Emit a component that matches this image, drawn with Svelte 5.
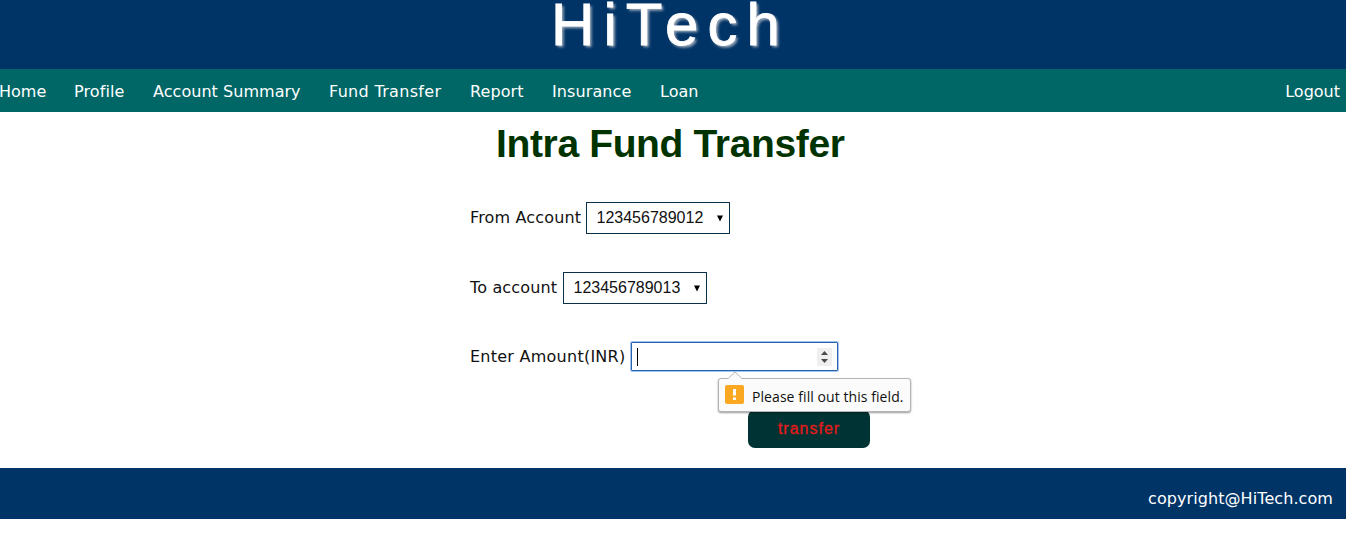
<script>
  const links = [
    { label: 'Home', width: 75, spacing: 0 },
    { label: 'Profile', width: 79, spacing: 0.1 },
    { label: 'Account Summary', width: 176, spacing: 0.04 },
    { label: 'Fund Transfer', width: 141, spacing: 0.32 },
    { label: 'Report', width: 82, spacing: 0.1 },
    { label: 'Insurance', width: 108, spacing: 0.1 },
    { label: 'Loan', width: 60, spacing: 0 }
  ];
  const accounts = [
    { label: 'From Account', value: '123456789012', labelWidth: 116 },
    { label: 'To account', value: '123456789013', labelWidth: 93 }
  ];
</script>

<div class="page">
  <header><div class="brand">HiTech</div></header>
  <nav>
    <div class="links">
      {#each links as link}
        <span class="link" style="width: {link.width}px; letter-spacing: {link.spacing}px">{link.label}</span>
      {/each}
    </div>
    <span>Logout</span>
  </nav>
  <main>
    <h1>Intra Fund Transfer</h1>
    <form onsubmit={(e) => e.preventDefault()}>
      {#each accounts as account}
        <div class="row">
          <span class="label" style="width: {account.labelWidth}px">{account.label}</span>
          <div class="select">
            <span>{account.value}</span>
            <svg width="6" height="7" viewBox="0 0 6 7"><path d="M0 0.5H6L3 6.5Z" fill="#000" /></svg>
          </div>
        </div>
      {/each}
      <div class="row amount-row">
        <span class="label amount-label">Enter Amount(INR)</span>
        <div class="amount">
          <span class="caret"></span>
          <svg width="15" height="18" viewBox="0 0 15 18">
            <rect width="15" height="18" fill="#efefef" />
            <path d="M4 7L7.5 3L11 7ZM4 11L7.5 15L11 11Z" fill="#4a4a4a" />
          </svg>
          <div class="tip">
            <svg class="arrow" width="14" height="8" viewBox="0 0 14 8">
              <path d="M0 8L7 1L14 8Z" fill="#fbfbfb" />
              <path d="M0.5 7L7 1L13.5 7" fill="none" stroke="#b5b5b5" />
            </svg>
            <svg class="warn" width="19" height="19" viewBox="0 0 19 19">
              <rect width="19" height="19" rx="2" fill="#faa822" />
              <path d="M8 4H11V10.5H8ZM8 12.5H11V15H8Z" fill="#fff" />
            </svg>
            <span class="tip-text">Please fill out this field.</span>
          </div>
        </div>
      </div>
      <button type="submit">transfer</button>
    </form>
  </main>
  <footer>copyright@HiTech.com</footer>
</div>

<style>
  :global(body) { margin: 0; background: #fff; overflow: hidden; }
  .page {
    width: 1346px;
    height: 539px;
    font: 16px/20px Verdana, "DejaVu Sans", sans-serif;
    color: #111;
    white-space: nowrap;
  }
  header { height: 69px; background: #003366; display: flex; }
  .brand {
    margin: -10px 0 0 551px;
    font: 60px/69px "Liberation Sans", Arial, sans-serif;
    letter-spacing: 9.1px;
    color: #fff;
    -webkit-text-stroke: 0.8px #fff;
    text-shadow: 2px 2px 3px #a9b4c0;
  }
  nav {
    height: 43px;
    box-sizing: border-box;
    padding: 2px 6px 0 0;
    background: #006666;
    color: #fff;
    display: flex;
    align-items: center;
    justify-content: space-between;
  }
  .links { display: flex; margin-left: -1px; }
  .link { flex: none; }
  main { height: 356px; }
  h1 {
    margin: 0 0 0 496px;
    padding-top: 9px;
    font: bold 39px/46px "Liberation Sans", Arial, sans-serif;
    letter-spacing: -0.36px;
    color: #003300;
  }
  form { margin-left: 470px; padding-top: 35px; }
  .row { display: flex; height: 32px; margin-bottom: 38px; }
  .label { flex: none; line-height: 31px; letter-spacing: 0.16px; }
  .select {
    width: 144px;
    height: 32px;
    box-sizing: border-box;
    border: 1px solid #0b3049;
    padding: 0 6px 1px 9.5px;
    display: flex;
    align-items: center;
    justify-content: space-between;
    font-family: "Liberation Sans", Arial, sans-serif;
  }
  .select svg { margin-top: 1px; }
  .amount-row { height: 30px; }
  .amount-label { width: 161px; line-height: 29px; letter-spacing: 0.25px; }
  .amount {
    position: relative;
    width: 207px;
    height: 29px;
    box-sizing: border-box;
    border: 1px solid #2864ae;
    box-shadow: 0 0 0 1px #a3c2ed;
    border-radius: 1px;
    padding: 0 5px;
    display: flex;
    align-items: center;
    justify-content: space-between;
  }
  .caret { width: 1px; height: 18px; background: #000; }
  .tip {
    position: absolute;
    top: 35px;
    left: 86px;
    width: 193px;
    height: 34px;
    box-sizing: border-box;
    border: 1px solid #b5b5b5;
    border-radius: 3px;
    background: #fbfbfb;
    box-shadow: 0 1px 2px rgba(0, 0, 0, 0.4);
    display: flex;
    align-items: center;
    padding-left: 6px;
    z-index: 1;
  }
  .arrow { position: absolute; top: -8px; left: 9px; }
  .warn { flex: none; margin-top: -2px; }
  .tip-text {
    margin: 3px 0 0 8px;
    font: 14px/20px "Segoe UI", "Open Sans", sans-serif;
    letter-spacing: 0.07px;
  }
  button {
    display: block;
    width: 122px;
    height: 38px;
    margin: 0 0 0 278px;
    padding: 0 0 1px;
    border: 0;
    border-radius: 7px;
    background: #003333;
    color: #e51a1a;
    font: 16px "Liberation Sans", Arial, sans-serif;
    letter-spacing: 1px;
    -webkit-text-stroke: 0.3px #e51a1a;
  }
  footer {
    height: 51px;
    box-sizing: border-box;
    padding: 21px 13px 0 0;
    background: #003366;
    color: #fff;
    text-align: right;
    letter-spacing: 0.08px;
  }
</style>
